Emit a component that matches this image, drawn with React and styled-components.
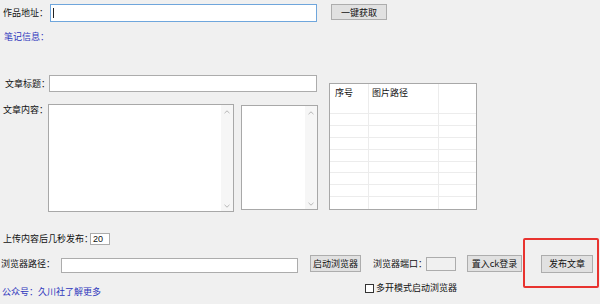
import React from 'react';
import styled, { createGlobalStyle } from 'styled-components';

const Global = createGlobalStyle`
  html, body { margin: 0; padding: 0; background: #f0f0f0; }
  body {
    width: 600px; height: 304px; overflow: hidden;
    font-family: "Noto Sans CJK SC", "Noto Sans", sans-serif;
    font-size: 9px; color: #111;
  }
`;

const Page = styled.div`
  position: relative;
  width: 600px;
  height: 304px;
  background: #f0f0f0;
  display: flex;
  flex-direction: column;
`;

const Row = styled.div`
  display: flex;
  align-items: center;
  height: ${p => p.$h}px;
  margin-top: ${p => p.$mt || 0}px;
  padding-left: ${p => (p.$pl ?? 3)}px;
`;

const Label = styled.span`
  flex-shrink: 0;
  width: ${p => (p.$w ? `${p.$w}px` : 'auto')};
  margin-left: ${p => p.$ml || 0}px;
  margin-top: ${p => p.$mt || 0}px;
  line-height: 10px;
  white-space: nowrap;
  color: ${p => (p.$blue ? '#2f37bd' : '#111')};
`;

const Field = styled.div`
  position: relative;
  flex-shrink: 0;
  box-sizing: border-box;
  width: ${p => p.$w}px;
  height: ${p => p.$h}px;
  background: #fff;
  border: 1px solid ${p => (p.$focus ? '#6fa6dc' : '#acacac')};
  font-family: "Liberation Sans", "Noto Sans", sans-serif;
  font-size: 9px;
  line-height: ${p => p.$h - 2}px;
  padding-left: 2px;
  color: #111;
`;

const Caret = styled.span`
  position: absolute;
  left: 2px;
  top: 3px;
  width: 1px;
  height: 10px;
  background: #222;
`;

const Button = styled.div`
  flex-shrink: 0;
  box-sizing: border-box;
  width: ${p => p.$w}px;
  height: ${p => p.$h}px;
  margin-left: ${p => p.$ml || 0}px;
  align-self: ${p => p.$self || 'auto'};
  background: #e1e1e1;
  border: 1px solid #adadad;
  display: flex;
  align-items: center;
  justify-content: center;
  font-size: 9px;
  color: #111;
  white-space: nowrap;
`;

const Main = styled.div`
  display: flex;
  align-items: flex-start;
  margin-top: 33px;
`;

const LeftCol = styled.div`
  display: flex;
  flex-direction: column;
  width: 315px;
  padding-left: 3px;
`;

const ContentRow = styled.div`
  display: flex;
  align-items: flex-start;
  margin-top: 12px;
`;

const TextArea = styled.div`
  flex-shrink: 0;
  box-sizing: border-box;
  width: ${p => p.$w}px;
  height: ${p => p.$h}px;
  margin-left: ${p => p.$ml || 0}px;
  margin-top: ${p => p.$mt || 0}px;
  background: #fff;
  border: 1px solid #a8a8a8;
  display: flex;
  justify-content: flex-end;
`;

const Scrollbar = styled.div`
  width: 12px;
  height: 100%;
  background: #f6f6f6;
  display: flex;
  flex-direction: column;
  justify-content: space-between;
  align-items: center;
  padding: 5px 0 3px;
  box-sizing: border-box;
`;

const Chevron = ({ down }) => (
  <svg width="6" height="4" viewBox="0 0 6 4">
    <path d={down ? 'M0.5 0.8 L3 3.2 L5.5 0.8' : 'M0.5 3.2 L3 0.8 L5.5 3.2'} fill="none" stroke="#b0b0b0" strokeWidth="0.9" />
  </svg>
);

const Table = styled.div`
  box-sizing: border-box;
  width: 148px;
  height: 127px;
  margin-left: 11px;
  margin-top: 8px;
  background: #fff;
  border: 1px solid #a8a8a8;
  display: grid;
  grid-template-columns: 39px 70px 1fr;
  grid-template-rows: 30px repeat(8, 1fr);
`;

const Cell = styled.div`
  border-right: ${p => (p.$last ? 'none' : '1px solid #ececec')};
  border-bottom: ${p => (p.$bottom ? 'none' : '1px solid #ececec')};
  padding: ${p => (p.$head ? `4px 0 0 ${p.$pad ?? 5}px` : '0')};
  line-height: 10px;
  font-size: 9px;
  color: #111;
  white-space: nowrap;
`;

const Bottom = styled.div`
  display: flex;
  align-items: flex-start;
  margin-top: 9px;
`;

const Col = styled.div`
  display: flex;
  flex-direction: column;
  margin-left: ${p => p.$ml || 0}px;
`;

const CheckBox = styled.span`
  box-sizing: border-box;
  width: 9px;
  height: 9px;
  background: #fff;
  border: 1px solid #333;
  margin-right: 2px;
`;

const Highlight = styled.div`
  position: absolute;
  left: 523px;
  top: 238px;
  width: 76px;
  height: 50px;
  box-sizing: border-box;
  border: 2px solid #e8332f;
  border-radius: 2px;
  pointer-events: none;
`;

export default function App() {
  const rows = Array.from({ length: 8 }, (_, i) => i);
  return (
    <>
      <Global />
      <Page>
        <Row $mt={4} $h={18}>
          <Label $w={47}>作品地址：</Label>
          <Field $w={267} $h={18} $focus><Caret /></Field>
          <Button $w={56} $h={16} $ml={14} $self="flex-start">一键获取</Button>
        </Row>
        <Row $mt={10} $h={10} $pl={4}>
          <Label $blue>笔记信息：</Label>
        </Row>
        <Main>
          <LeftCol>
            <Row $h={17} $pl={2}>
              <Label $w={44}>文章标题：</Label>
              <Field $w={268} $h={17} />
            </Row>
            <ContentRow>
              <Label $w={45} $mt={1}>文章内容：</Label>
              <TextArea $w={186} $h={108}>
                <Scrollbar><Chevron /><Chevron down /></Scrollbar>
              </TextArea>
              <TextArea $w={77} $h={105} $ml={7} $mt={1}>
                <Scrollbar><Chevron /><Chevron down /></Scrollbar>
              </TextArea>
            </ContentRow>
          </LeftCol>
          <Table>
            <Cell $head>序号</Cell>
            <Cell $head $pad={3}>图片路径</Cell>
            <Cell $head $last />
            {rows.map(i => (
              <React.Fragment key={i}>
                <Cell $bottom={i === 7} />
                <Cell $bottom={i === 7} />
                <Cell $bottom={i === 7} $last />
              </React.Fragment>
            ))}
          </Table>
        </Main>
        <Row $mt={21} $h={12}>
          <Label $w={87}>上传内容后几秒发布：</Label>
          <Field $w={20} $h={12}>20</Field>
        </Row>
        <Bottom>
          <Col>
            <Row $h={19} $pl={1}>
              <Label $w={60}>浏览器路径：</Label>
              <Field $w={237} $h={15} style={{ marginTop: 3 }} />
            </Row>
            <Row $h={10} $mt={14} $pl={2}>
              <Label $blue>公众号：久川社了解更多</Label>
            </Row>
          </Col>
          <Col $ml={12}>
            <Row $h={19} $pl={0}>
              <Button $w={51} $h={17}>启动浏览器</Button>
              <Label $w={53} $ml={12}>浏览器端口：</Label>
              <Field $w={30} $h={14} style={{ background: '#f0f0f0' }} />
              <Button $w={55} $h={17} $ml={11}>置入ck登录</Button>
              <Button $w={52} $h={18} $ml={19}>发布文章</Button>
            </Row>
            <Row $h={10} $mt={10} $pl={55}>
              <CheckBox />
              <Label>多开模式启动浏览器</Label>
            </Row>
          </Col>
        </Bottom>
        <Highlight />
      </Page>
    </>
  );
}
